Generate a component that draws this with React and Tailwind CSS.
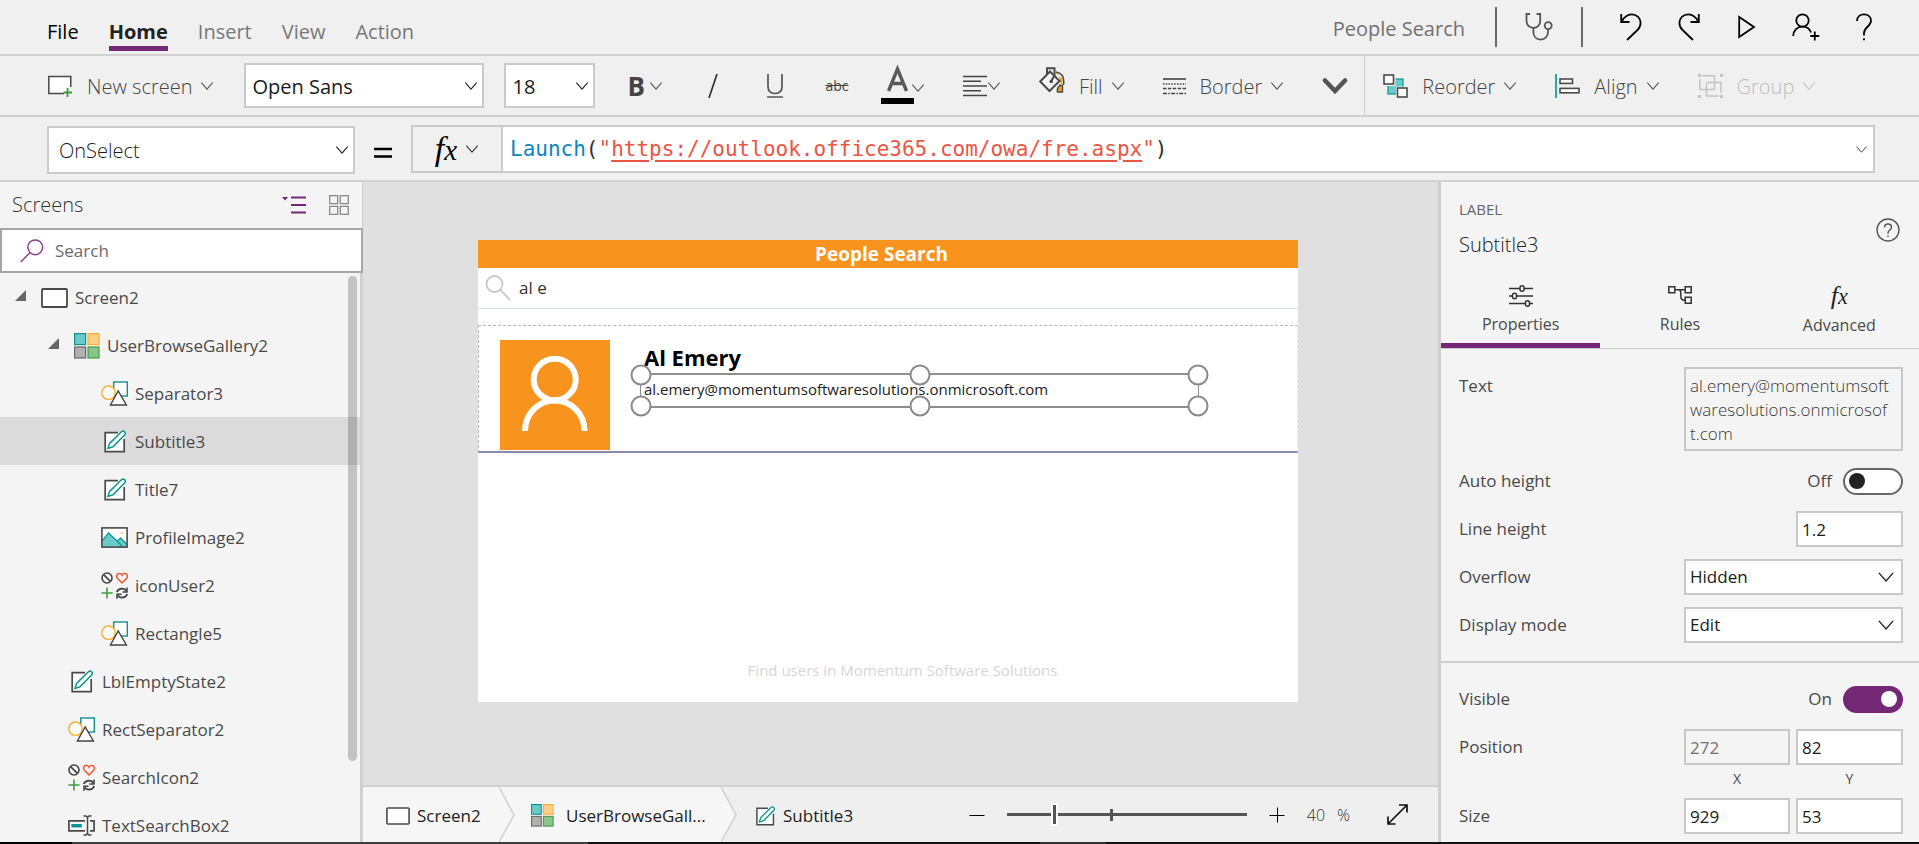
import React from "react";

/* ---------- small drawing helpers ---------- */

function Chevron({ className = "h-2 w-3.5", stroke = "#555555", width = 1.2 }) {
  return (
    <svg viewBox="0 0 14 9" className={`shrink-0 ${className}`} fill="none" aria-hidden="true">
      <path d="M.6 .8 7 8 13.4 .8" stroke={stroke} strokeWidth={width} />
    </svg>
  );
}

function Fx({ className }) {
  return (
    <span
      aria-hidden="true"
      className={`font-['Liberation_Serif',serif] leading-6 italic ${className}`}
    >
      f<span className="text-[0.85em]">x</span>
    </span>
  );
}

function ScreenIcon({ className = "h-5 w-[27px]" }) {
  return (
    <svg viewBox="0 0 27 20" className={`shrink-0 ${className}`} aria-hidden="true">
      <rect x="1" y="1" width="25" height="18" rx="1" fill="#fff" stroke="#4a4a4a" strokeWidth="1.8" />
    </svg>
  );
}

function GalleryIcon({ className = "h-[26px] w-[26px]" }) {
  return (
    <svg viewBox="0 0 26 26" className={`shrink-0 ${className}`} strokeWidth="1.2" aria-hidden="true">
      <rect x=".6" y=".6" width="11" height="11" fill="#68cbca" stroke="#12908c" />
      <rect x="14" y=".6" width="11" height="11" fill="#fccf86" stroke="#fbad34" />
      <rect x=".6" y="14" width="11" height="11" fill="#b0b0b0" stroke="#666" />
      <rect x="14" y="14" width="11" height="11" fill="#89c48a" stroke="#429b45" />
    </svg>
  );
}

function ShapesIcon() {
  return (
    <svg viewBox="0 0 27 25" className="h-[25px] w-[27px] shrink-0" fill="#fff" strokeWidth="1.4" aria-hidden="true">
      <rect x="12.7" y="1" width="13.6" height="14" stroke="#12908c" />
      <circle cx="7.5" cy="11.7" r="6.7" stroke="#fbad34" />
      <path d="M9.4 24 17.2 10 25.4 24Z" stroke="#444" />
    </svg>
  );
}

function LabelIcon({ className = "h-[23px] w-[27px]" }) {
  return (
    <svg viewBox="0 0 27 23" className={`shrink-0 ${className}`} aria-hidden="true">
      <rect x="4.2" y="2.6" width="19" height="19" fill="#fff" />
      <path d="M17 2.6H4.2V21.6H23.2V9" fill="none" stroke="#4a4a4a" strokeWidth="1.7" />
      <path
        d="M7 18.4 8.6 13.4 20.4 1.8C21.4 .9 22.8 1 23.6 1.8C24.4 2.7 24.4 4 23.6 4.9L12 16.8Z"
        fill="#fff"
        stroke="#0d9490"
        strokeWidth="1.5"
      />
    </svg>
  );
}

function ImageIcon() {
  return (
    <svg viewBox="0 0 27 21" className="h-[21px] w-[27px] shrink-0" aria-hidden="true">
      <rect x=".9" y=".9" width="25.2" height="19.2" fill="#fff" />
      <path d="M1 14 7.6 6 16 14.5 19.5 11 26 17V20H1Z" fill="#68cbca" />
      <path d="M1.4 13.4 7.6 6 21 19M15.6 14.2 19.5 11 25.6 17" fill="none" stroke="#0d9490" strokeWidth="1.2" />
      <circle cx="21" cy="6" r="1.3" fill="#fccf86" />
      <rect x=".9" y=".9" width="25.2" height="19.2" fill="none" stroke="#4a4a4a" strokeWidth="1.6" />
    </svg>
  );
}

function IconsIcon() {
  return (
    <svg viewBox="0 0 27 27" className="h-[27px] w-[27px] shrink-0" fill="none" aria-hidden="true">
      <circle cx="6" cy="6" r="5" stroke="#444" strokeWidth="1.6" />
      <path d="M2.6 2.6 9.4 9.4" stroke="#444" strokeWidth="1.6" />
      <path
        d="M21 11 16.4 6.2C15 4.6 15.6 2 17.7 1.5C19.2 1.1 20.4 2 21 3.2C21.6 2 22.8 1.1 24.3 1.5C26.4 2 27 4.6 25.6 6.2Z"
        stroke="#f1501f"
        strokeWidth="1.4"
      />
      <path d="M6 15.5V26.5M.4 21H11.6" stroke="#429b45" strokeWidth="1.6" />
      <path d="M15.8 20C17.4 16.2 22.6 15.6 25.2 18.6M26.2 22C24.6 26.2 19.4 26.6 16.8 23.6" stroke="#444" strokeWidth="1.8" />
      <path d="M26 15.4V20H21.4M16 26.8V22.2H20.6" stroke="#444" strokeWidth="1.6" />
    </svg>
  );
}

function TextInputIcon() {
  return (
    <svg viewBox="0 0 27 21" className="h-[21px] w-[27px] shrink-0" fill="none" aria-hidden="true">
      <path d="M17 5.8H.9V15.8H17M22 5.8H26.1V15.8H22" stroke="#4a4a4a" strokeWidth="1.7" />
      <rect x="3.4" y="9" width="10.4" height="3.4" fill="#0d9490" />
      <path d="M15.5 1H18L19.5 2.4 21 1H23.5M19.5 2.4V18.6M15.5 20H18L19.5 18.6 21 20H23.5" stroke="#4a4a4a" strokeWidth="1.5" />
    </svg>
  );
}

function Expander() {
  return (
    <svg viewBox="0 0 11 11" className="size-[11px] shrink-0 -translate-y-0.5" aria-hidden="true">
      <path d="M0 11H11V0Z" fill="#666" />
    </svg>
  );
}

function Magnifier({ className, stroke, width = 1.6 }) {
  return (
    <svg viewBox="0 0 26 26" className={`shrink-0 ${className}`} fill="none" stroke={stroke} strokeWidth={width} aria-hidden="true">
      <circle cx="16.5" cy="9" r="8" />
      <path d="M10.8 14.8 .8 25" />
    </svg>
  );
}

/* ---------- header ---------- */

function Header() {
  const tabs = ["Insert", "View", "Action"];
  return (
    <header className="flex h-14 shrink-0 items-stretch border-b-2 border-[#d1d1d1] pr-[47px] pl-[47px] text-xl">
      <nav className="flex items-start gap-[30px] pt-[18px] leading-7 text-[#777777]">
        <a href="#file" className="text-black">File</a>
        <a href="#home" className="border-b-[5px] border-[#742774] font-bold text-[#222222]">Home</a>
        {tabs.map((t) => (
          <a key={t} href={`#${t.toLowerCase()}`}>{t}</a>
        ))}
      </nav>
      <div className="ml-auto flex items-center text-[#707070]">
        <span className="pt-1">People Search</span>
        <span className="ml-[30px] h-10 w-0.5 bg-[#6a6a6a]" />
        <button aria-label="App checker" className="mx-7">
          <svg viewBox="0 0 28 28" className="size-7" fill="none" stroke="#555" strokeWidth="1.8">
            <path d="M5 1H1.5V8C1.5 12 4.2 14.8 8.4 14.8C12.6 14.8 15.2 12 15.2 8V1H11.6" />
            <path d="M8.4 14.8V19C8.4 23.4 11.2 26.6 15.6 26.6C20 26.6 23 23.4 23 19V16.2" />
            <circle cx="23.2" cy="12.6" r="3.5" />
          </svg>
        </button>
        <span className="h-10 w-0.5 bg-[#6a6a6a]" />
        <div className="ml-[37px] flex items-center gap-9 text-black">
          <button aria-label="Undo">
            <svg viewBox="0 0 22 28" className="h-7 w-[22px]" fill="none" stroke="#000" strokeWidth="1.8">
              <path d="M1.2 1V9H9.5" />
              <path d="M1.6 8.5C4.5 3.5 7.5 1.4 11.5 1.4C17 1.4 20.6 5 20.6 10C20.6 12.8 19.5 15 17.5 17L7 27" />
            </svg>
          </button>
          <button aria-label="Redo">
            <svg viewBox="0 0 22 28" className="h-7 w-[22px]" fill="none" stroke="#000" strokeWidth="1.8">
              <path d="M20.8 1V9H12.5" />
              <path d="M20.4 8.5C17.5 3.5 14.5 1.4 10.5 1.4C5 1.4 1.4 5 1.4 10C1.4 12.8 2.5 15 4.5 17L15 27" />
            </svg>
          </button>
          <button aria-label="Preview the app">
            <svg viewBox="0 0 20 24" className="h-6 w-5" fill="none" stroke="#000" strokeWidth="1.8">
              <path d="M3.2 2V22L18 12Z" />
            </svg>
          </button>
          <button aria-label="Share">
            <svg viewBox="0 0 28 28" className="size-7" fill="none" stroke="#000" strokeWidth="1.8">
              <circle cx="10.5" cy="7.5" r="6.2" />
              <path d="M1.2 23C1.2 17.5 5 13.7 10.5 13.7C14.5 13.7 17.8 16 19 19.5" />
              <path d="M22.8 18.5V27.5M18.3 23H27.3" />
            </svg>
          </button>
          <button aria-label="Help">
            <svg viewBox="0 0 16 28" className="h-7 w-4" fill="none" stroke="#000" strokeWidth="1.8">
              <path d="M1 8C1 4 4 1.4 8 1.4C12 1.4 15 4 15 7.8C15 13.5 8 14 8 20V22.5" />
              <path d="M8 25.2V27.2" />
            </svg>
          </button>
        </div>
      </div>
    </header>
  );
}

/* ---------- ribbon ---------- */

function PickList({ label, options, className, chevron = "right-1.5" }) {
  return (
    <div className={`relative ${className}`}>
      <select
        aria-label={label}
        className="size-full appearance-none border-2 border-[#cacaca] bg-white px-1.5 pt-0.5 text-[#1b1b1b] outline-none"
      >
        {options.map((o) => (
          <option key={o}>{o}</option>
        ))}
      </select>
      <span className={`pointer-events-none absolute inset-y-0 flex items-center ${chevron}`}>
        <Chevron stroke="#222" />
      </span>
    </div>
  );
}

function RibbonButton({ icon, label, className = "", stroke }) {
  return (
    <button className={`flex items-center gap-2 ${className}`}>
      <span className="flex items-center gap-3.5">
        {icon}
        <span className="pt-0.5">{label}</span>
      </span>
      <Chevron stroke={stroke} />
    </button>
  );
}

function Ribbon() {
  return (
    <div className="flex h-[61px] shrink-0 items-center border-b-2 border-[#d1d1d1] pl-[47px] text-xl font-light text-[#444444]">
      <RibbonButton
        label="New screen"
        icon={
          <svg viewBox="0 0 26 22" className="h-[22px] w-[26px]" aria-hidden="true">
            <path d="M17 18.5H1.8V1.5H23.8V12" fill="#fff" stroke="#4a4a4a" strokeWidth="1.5" />
            <path d="M20.5 13V22M16.5 17.5H25" stroke="#3f9c42" strokeWidth="1.8" />
          </svg>
        }
      />
      <PickList label="Font" options={["Open Sans", "Segoe UI"]} className="ml-[30px] h-[45px] w-60 font-normal" />
      <PickList label="Font size" options={["18", "20", "24"]} className="ml-5 h-[45px] w-[91px] font-normal" />
      <div className="ml-8 flex items-center gap-[38px]">
        <button aria-label="Bold" className="flex items-center gap-1 text-[26px] leading-8 font-bold text-[#444444]">
          B<Chevron />
        </button>
        <button aria-label="Italic">
          <svg viewBox="0 0 24 24" className="size-6" aria-hidden="true">
            <path d="M16 0 8 24" stroke="#333" strokeWidth="1.7" />
          </svg>
        </button>
        <button aria-label="Underline">
          <svg viewBox="0 0 24 24" className="size-6" fill="none" stroke="#555" strokeWidth="1.7" aria-hidden="true">
            <path d="M5 0V12.5C5 17 7.5 19.5 12 19.5C16.5 19.5 19 17 19 12.5V0M4 23H20" />
          </svg>
        </button>
        <button aria-label="Strikethrough" className="w-6 text-center text-sm font-normal text-[#444444] line-through">
          abc
        </button>
        <button aria-label="Font colour" className="flex items-end">
          <svg viewBox="0 0 22 36" className="h-9 w-[22px] overflow-visible" aria-hidden="true">
            <path d="M1.5 23 10.5 1 19.5 23M4.8 15.5H16.2" fill="none" stroke="#5a5a5a" strokeWidth="3.4" />
            <rect x="-6" y="30" width="33" height="6" fill="#000" />
          </svg>
          <Chevron className="mb-3 ml-0.5 h-2 w-3.5" />
        </button>
        <button aria-label="Text alignment" className="flex items-center">
          <svg viewBox="0 0 24 22" className="h-[22px] w-6" stroke="#444" strokeWidth="1.5" aria-hidden="true">
            <path d="M0 1.5H24M0 6.2H18M0 11H24M0 15.8H18M0 20.5H24" />
          </svg>
          <Chevron />
        </button>
        <RibbonButton
          label="Fill"
          icon={
            <svg viewBox="0 0 26 30" className="h-[30px] w-[26px] -translate-y-1" fill="none" aria-hidden="true">
              <path d="M17 5C23 6 25.5 11 24.5 18" stroke="#4a4a4a" strokeWidth="1.5" />
              <path d="M15 5C19 6 21 9 20.5 14L23.5 18V12Z" fill="#e0a51d" />
              <path d="M11 4.5 20.5 14 10.5 24 1.2 14.5Z" fill="#f5f5f5" stroke="#4a4a4a" strokeWidth="2" />
              <path d="M8 7.5V1.2H15.5V8.5L12.2 14" stroke="#4a4a4a" strokeWidth="2" />
              <circle cx="12.2" cy="14.5" r="1.8" fill="#4a4a4a" />
              <path d="M21 18C18.5 21 17.5 23 18.5 25H23.5V18.5Z" fill="#e0a51d" stroke="#4a4a4a" strokeWidth="1.4" />
            </svg>
          }
        />
        <RibbonButton
          label="Border"
          icon={
            <svg viewBox="0 0 23 18" className="h-[18px] w-[23px]" stroke="#444" strokeWidth="1.6" aria-hidden="true">
              <path d="M0 2H23" />
              <path d="M0 7H23" strokeDasharray="1.5 1.3" />
              <path d="M0 11.5H23" strokeDasharray="3.4 1.5" />
              <path d="M0 16.5H23" strokeDasharray="4 1.3 1.5 1.3" />
            </svg>
          }
        />
        <button aria-label="More">
          <svg viewBox="0 0 26 16" className="h-4 w-[26px]" fill="none" aria-hidden="true">
            <path d="M3 2.5 13 13 23 2.5" stroke="#555" strokeWidth="4.5" strokeLinecap="round" />
          </svg>
        </button>
      </div>
      <div className="ml-4 flex items-center gap-[38px] self-stretch border-l border-[#cfcfcf] pl-[18px]">
        <RibbonButton
          label="Reorder"
          icon={
            <svg viewBox="0 0 25 24" className="h-6 w-[25px]" aria-hidden="true">
              <rect x="5" y="5" width="15" height="15" fill="#68cbca" stroke="#0d9490" strokeWidth="1.2" />
              <rect x="0" y="0" width="12.5" height="12" fill="#f0f0f0" />
              <rect x="13" y="12.5" width="12" height="12" fill="#f0f0f0" />
              <rect x="1" y="1" width="9.5" height="9" fill="#fff" stroke="#4a4a4a" strokeWidth="1.6" />
              <rect x="14.5" y="14" width="9.5" height="9" fill="#fff" stroke="#4a4a4a" strokeWidth="1.6" />
            </svg>
          }
        />
        <RibbonButton
          label="Align"
          icon={
            <svg viewBox="0 0 25 24" className="h-6 w-[25px]" aria-hidden="true">
              <path d="M1 0V24" stroke="#12a09c" strokeWidth="1.8" />
              <rect x="5" y="5" width="12.5" height="4.4" fill="#fff" stroke="#4a4a4a" strokeWidth="1.6" />
              <rect x="5" y="14.4" width="19" height="4.4" fill="#fff" stroke="#4a4a4a" strokeWidth="1.6" />
            </svg>
          }
        />
        <RibbonButton
          label="Group"
          stroke="#c4c4c4"
          className="text-[#bdbdbd]"
          icon={
            <svg viewBox="0 0 25 24" className="h-6 w-[25px]" fill="none" stroke="#c4c4c4" strokeWidth="1.5" aria-hidden="true">
              <path d="M4 1.8H16.5V15.5H1.8V5M9 8.5H23V19M21 22H8.5V8.5" />
              <path d="M0 1.5H3M22 1.5H25M0 22.5H3M22 22.5H25" strokeWidth="3" />
            </svg>
          }
        />
      </div>
    </div>
  );
}

/* ---------- formula bar ---------- */

function FormulaBar() {
  return (
    <div className="flex h-[65px] shrink-0 items-start border-b-2 border-[#d1d1d1] pt-2 pr-11 pl-[47px] text-xl">
      <PickList
        label="Property"
        options={["OnSelect", "Text", "Visible"]}
        className="mt-px h-12 w-[308px] font-light [&>select]:px-2.5"
      />
      <svg viewBox="0 0 18 12" className="mx-[19px] mt-[22px] h-3 w-[18px] shrink-0" aria-hidden="true">
        <path d="M0 2H18M0 9.5H18" stroke="#000" strokeWidth="2.6" />
      </svg>
      <button
        aria-label="Functions"
        className="flex h-12 w-[90px] shrink-0 items-center justify-center gap-2 border-2 border-r-0 border-[#cacaca]"
      >
        <Fx className="text-[34px] text-black" />
        <Chevron stroke="#333" />
      </button>
      <div className="flex h-12 min-w-0 flex-1 items-center justify-between border-2 border-[#cacaca] bg-white pr-1.5 pl-[7px]">
        <code className="pt-px font-['DejaVu_Sans_Mono',monospace] text-[21px] text-[#333333]">
          <span className="text-[#0c86bd]">Launch</span>(<span className="text-[#ea5545]">"</span>
          <a href="#formula" className="text-[#ea5545] underline decoration-2 underline-offset-4">
            https://outlook.office365.com/owa/fre.aspx
          </a>
          <span className="text-[#ea5545]">"</span>)
        </code>
        <button aria-label="Expand formula bar">
          <Chevron className="h-[7px] w-[11px]" stroke="#333" />
        </button>
      </div>
    </div>
  );
}

/* ---------- screens tree ---------- */

const TREE = [
  { name: "Screen2", icon: ScreenIcon, pad: "pl-[15px]", open: true },
  { name: "UserBrowseGallery2", icon: GalleryIcon, pad: "pl-12", open: true },
  { name: "Separator3", icon: ShapesIcon, pad: "pl-[101px]" },
  { name: "Subtitle3", icon: LabelIcon, pad: "pl-[101px]", selected: true },
  { name: "Title7", icon: LabelIcon, pad: "pl-[101px]" },
  { name: "ProfileImage2", icon: ImageIcon, pad: "pl-[101px]" },
  { name: "iconUser2", icon: IconsIcon, pad: "pl-[101px]" },
  { name: "Rectangle5", icon: ShapesIcon, pad: "pl-[101px]" },
  { name: "LblEmptyState2", icon: LabelIcon, pad: "pl-[68px]" },
  { name: "RectSeparator2", icon: ShapesIcon, pad: "pl-[68px]" },
  { name: "SearchIcon2", icon: IconsIcon, pad: "pl-[68px]" },
  { name: "TextSearchBox2", icon: TextInputIcon, pad: "pl-[68px]" },
];

function TreePanel() {
  return (
    <aside className="flex w-[363px] shrink-0 flex-col bg-[#f4f4f4]">
      <div className="flex h-[46px] shrink-0 items-center border-r border-[#cfcfcf] pr-[13px] pl-3">
        <h2 className="text-xl font-light text-[#333333]">Screens</h2>
        <button aria-label="Tree view" className="ml-auto">
          <svg viewBox="0 0 24 18" className="h-[18px] w-6" aria-hidden="true">
            <path d="M9 1.5H24M9 9H24M9 16.5H24" stroke="#742774" strokeWidth="1.8" />
            <path d="M0 1H6L3 4.5Z" fill="#742774" />
          </svg>
        </button>
        <button aria-label="Thumbnail view" className="ml-[23px]">
          <svg viewBox="0 0 20 20" className="size-5" fill="none" stroke="#888" strokeWidth="1.3" aria-hidden="true">
            <path d="M.7 .7H8.7V8.7H.7ZM11.3 .7H19.3V8.7H11.3ZM.7 11.3H8.7V19.3H.7ZM11.3 11.3H19.3V19.3H11.3Z" />
          </svg>
        </button>
      </div>
      <label className="flex h-[45px] shrink-0 items-center gap-[11px] border-2 border-[#a6a6a6] bg-white pl-[18px]">
        <Magnifier className="size-6" stroke="#8b3f8b" />
        <input
          aria-label="Search"
          placeholder="Search"
          className="min-w-0 flex-1 bg-transparent text-[17px] outline-none placeholder:text-[#6a6a6a]"
        />
      </label>
      <div className="relative min-h-0 flex-1 overflow-hidden border-r-[3px] border-[#d1d1d1]">
        <ul>
          {TREE.map(({ name, icon: Icon, pad, open, selected }) => (
            <li key={name}>
              <button
                className={`flex h-12 w-full items-center pt-px text-[17px] text-[#4a4a4a] ${pad} ${
                  selected ? "bg-[#dbdbdb]" : ""
                }`}
              >
                {open && (
                  <span className="mr-[15px]">
                    <Expander />
                  </span>
                )}
                <Icon />
                <span className="ml-[7px]">{name}</span>
              </button>
            </li>
          ))}
        </ul>
        <div className="absolute top-[3px] right-[3px] h-[485px] w-[9px] rounded-full bg-black/20" />
      </div>
    </aside>
  );
}

/* ---------- design canvas ---------- */

function Handle({ className }) {
  return (
    <span className={`absolute size-[21px] -translate-1/2 rounded-full border-2 border-[#8a8a8a] bg-white ${className}`} />
  );
}

function Canvas() {
  return (
    <div className="min-h-0 flex-1 overflow-hidden bg-[#e0e0e0] pt-[58px] pl-[115px]">
      <section className="flex h-[462px] w-[820px] flex-col bg-white font-['Open_Sans',sans-serif]">
        <h1 className="flex h-7 shrink-0 items-center justify-center bg-[#f8941d] pt-px pr-[13px] text-[19px] font-bold text-white">
          People Search
        </h1>
        <label className="flex h-[41px] shrink-0 items-center gap-2 border-b border-[#d3dff0] pl-[7px]">
          <Magnifier className="size-[26px] -scale-x-100" stroke="#c8c8c8" width={1.8} />
          <input
            aria-label="Search people"
            defaultValue="al e"
            className="min-w-0 flex-1 bg-transparent text-[17px] font-medium text-[#333333] outline-none"
          />
        </label>
        <article className="relative mt-4 flex h-[128px] shrink-0 border border-b-2 border-dashed border-[#b5b5b5] border-r-[#e4e4e4] border-b-[#8b8bb0] pt-[14px] pl-[21px] [border-bottom-style:solid]">
          <div className="size-[110px] shrink-0 bg-[#f8941d]">
            <svg viewBox="0 0 110 110" className="size-full" fill="none" stroke="#fff" strokeWidth="6" aria-hidden="true">
              <ellipse cx="54.7" cy="39.5" rx="21" ry="20.8" />
              <path d="M25 91C25 74 38 60.5 54.7 60.5C71.5 60.5 84.5 74 84.5 91" />
            </svg>
          </div>
          <div className="ml-[34px] flex flex-col whitespace-nowrap text-black">
            <strong className="pt-0.5 text-[22px] leading-[30px] font-bold">Al Emery</strong>
            <span className="pt-[5px] text-[15px] leading-6 text-[#222222]">
              al.emery@momentumsoftwaresolutions.onmicrosoft.com
            </span>
          </div>
          <div className="absolute top-[47px] left-[161px] h-[35px] w-[559px] border-x border-y-2 border-[#8f8f8f]">
            <Handle className="top-0 left-0" />
            <Handle className="top-0 left-1/2" />
            <Handle className="top-0 left-full" />
            <Handle className="top-full left-0" />
            <Handle className="top-full left-1/2" />
            <Handle className="top-full left-full" />
          </div>
        </article>
        <p className="mt-auto pr-px pb-5 pl-[30px] text-center text-[15px] leading-6 text-[#d6d6d6]">
          Find users in Momentum Software Solutions
        </p>
      </section>
    </div>
  );
}

function CrumbArrow({ fill }) {
  return (
    <svg viewBox="0 0 16 55" preserveAspectRatio="none" className="h-full w-4 shrink-0" aria-hidden="true">
      <rect width="16" height="55" fill={fill} />
      <path d="M0 0 15 28 0 55Z" fill="#f6f6f6" />
      <path d="M0 0 15 28 0 55" fill="none" stroke="#d4d4d4" strokeWidth="1.6" />
    </svg>
  );
}

function StatusBar() {
  return (
    <footer className="flex h-[57px] shrink-0 items-center border-t-2 border-[#d1d1d1] bg-[#efefef] text-[17px] text-[#222222]">
      <nav aria-label="Selection path" className="flex h-full">
        <a href="#screen2" className="flex w-[136px] items-center gap-[7px] bg-[#f6f6f6] pt-0.5 pl-[23px]">
          <ScreenIcon className="h-[18px] w-6" />
          Screen2
        </a>
        <CrumbArrow fill="#f6f6f6" />
        <a href="#gallery" className="flex w-[206px] items-center gap-3 bg-[#f6f6f6] pt-0.5 pl-4">
          <GalleryIcon className="size-[23px]" />
          UserBrowseGall...
        </a>
        <CrumbArrow fill="#efefef" />
        <a href="#subtitle" className="flex items-center gap-1.5 pt-0.5 pl-4">
          <LabelIcon className="h-5 w-6" />
          Subtitle3
        </a>
      </nav>
      <div className="ml-auto flex items-center pr-[30px]">
        <button aria-label="Zoom out">
          <svg viewBox="0 0 16 16" className="size-4" aria-hidden="true">
            <path d="M.5 8.5H15.5" stroke="#000" strokeWidth="1" />
          </svg>
        </button>
        <div className="relative ml-[22px] flex h-6 w-60 items-center">
          <input
            type="range"
            aria-label="Zoom"
            min="0"
            max="210"
            defaultValue="40"
            className="h-6 w-full appearance-none bg-transparent [&::-webkit-slider-runnable-track]:h-[3px] [&::-webkit-slider-runnable-track]:bg-[#555555] [&::-webkit-slider-thumb]:-mt-[10px] [&::-webkit-slider-thumb]:h-[23px] [&::-webkit-slider-thumb]:w-[7px] [&::-webkit-slider-thumb]:appearance-none [&::-webkit-slider-thumb]:border-2 [&::-webkit-slider-thumb]:border-white [&::-webkit-slider-thumb]:bg-[#555555]"
          />
          <span className="pointer-events-none absolute left-[43%] h-3 w-[3px] bg-[#555555]" />
        </div>
        <button aria-label="Zoom in" className="ml-[22px]">
          <svg viewBox="0 0 16 16" className="size-4" aria-hidden="true">
            <path d="M.5 8.5H15.5M8.5 .5V15.5" stroke="#000" strokeWidth="1" />
          </svg>
        </button>
        <span className="ml-[22px] flex gap-3 text-base font-light text-[#333333]">
          <span>40</span>
          <span>%</span>
        </span>
        <button aria-label="Fit to window" className="ml-[37px]">
          <svg viewBox="0 0 21 21" className="size-[21px]" fill="none" stroke="#111" strokeWidth="1.7" aria-hidden="true">
            <path d="M1.5 19.5 19.5 1.5M12 1H20V8.5M1 12.5V20H8.5" />
          </svg>
        </button>
      </div>
    </footer>
  );
}

/* ---------- properties panel ---------- */

const FIELD = "h-9 border-2 border-[#c8c8c8] bg-white px-1 text-[17px] text-[#1b1b1b] outline-none";

function Row({ id, label, children }) {
  return (
    <div className="flex h-12 items-center justify-between">
      <label htmlFor={id}>{label}</label>
      {children}
    </div>
  );
}

function Toggle({ id, on }) {
  return (
    <span className="flex items-center gap-[11px]">
      {on ? "On" : "Off"}
      <input
        id={id}
        type="checkbox"
        role="switch"
        defaultChecked={on}
        className="flex h-[27px] w-[60px] appearance-none items-center rounded-full border-2 border-[#666666] bg-white px-1 before:size-4 before:rounded-full before:bg-[#222222] checked:justify-end checked:border-[#742774] checked:bg-[#742774] checked:before:bg-white"
      />
    </span>
  );
}

function PropertySelect({ id, options }) {
  return (
    <span className="relative w-[219px]">
      <select id={id} className={`${FIELD} w-full appearance-none`}>
        {options.map((o) => (
          <option key={o}>{o}</option>
        ))}
      </select>
      <span className="pointer-events-none absolute inset-y-0 right-2 flex items-center">
        <Chevron className="h-2.5 w-[18px]" stroke="#222" />
      </span>
    </span>
  );
}

function PropertiesPanel() {
  return (
    <aside className="flex w-[481px] shrink-0 flex-col overflow-hidden border-l-[3px] border-[#cfcfcf] bg-[#f4f4f4] text-[17px] text-[#4a4a4a]">
      <div className="flex h-[83px] shrink-0 items-center justify-between pr-[19px] pl-[18px]">
        <div className="pt-2.5">
          <p className="text-[15px] leading-6 text-[#666666]">LABEL</p>
          <h2 className="pt-2 text-xl leading-8 font-light text-[#222222]">Subtitle3</h2>
        </div>
        <button aria-label="Help on this control" className="mt-3">
          <svg viewBox="0 0 24 24" className="size-6" fill="none" stroke="#555" strokeWidth="1.4" aria-hidden="true">
            <circle cx="12" cy="12" r="11" />
            <path d="M8.5 9.5C8.5 7.5 10 6 12 6C14 6 15.5 7.3 15.5 9.2C15.5 12 12 12 12 15V15.8M12 17.5V19" />
          </svg>
        </button>
      </div>
      <div role="tablist" className="grid h-[84px] shrink-0 grid-cols-3 border-b border-[#cacaca] text-base">
        <button role="tab" aria-selected="true" className="flex flex-col items-center gap-1 border-b-[5px] border-[#742774] pt-[19px]">
          <svg viewBox="0 0 24 24" className="size-6" fill="#f4f4f4" stroke="#333" strokeWidth="1.5" aria-hidden="true">
            <path d="M0 4.5H24M0 12H24M0 19.5H24" />
            <rect x="11" y="1.7" width="4" height="5.6" rx="2" />
            <rect x="3.5" y="9.2" width="4" height="5.6" rx="2" />
            <rect x="16.5" y="16.7" width="4" height="5.6" rx="2" />
          </svg>
          Properties
        </button>
        <button role="tab" aria-selected="false" className="flex flex-col items-center gap-1 pt-[19px]">
          <svg viewBox="0 0 24 24" className="size-6" fill="none" stroke="#333" strokeWidth="1.5" aria-hidden="true">
            <path d="M.8 2.8H6.8V8.8H.8ZM17.2 2.8H23.2V8.8H17.2ZM17.2 13.3H23.2V19.3H17.2Z" />
            <path d="M6.8 5.8H17.2M11 5.8C13 6 12.8 8 12.8 10V12.5C12.8 15 14 16.3 17.2 16.3" />
          </svg>
          Rules
        </button>
        <button role="tab" aria-selected="false" className="flex flex-col items-center gap-1 pt-[19px]">
          <Fx className="text-[26px] text-[#222222]" />
          Advanced
        </button>
      </div>
      <form className="flex flex-col" onSubmit={(e) => e.preventDefault()}>
        <fieldset className="border-b-2 border-[#cfcfcf] pt-[18px] pr-4 pb-3 pl-[18px]">
          <div className="mb-1.5 flex items-start justify-between">
            <label htmlFor="p-text" className="pt-[7px] leading-6">Text</label>
            <textarea
              id="p-text"
              readOnly
              rows={3}
              value="al.emery@momentumsoftwaresolutions.onmicrosoft.com"
              className="h-[84px] w-[219px] resize-none overflow-hidden border-2 border-[#c8c8c8] bg-transparent pt-[5px] pr-[11px] pl-1 leading-6 font-light break-all text-[#3a3a3a] outline-none"
            />
          </div>
          <Row id="p-auto" label="Auto height">
            <Toggle id="p-auto" on={false} />
          </Row>
          <Row id="p-line" label="Line height">
            <input id="p-line" defaultValue="1.2" className={`${FIELD} w-[107px]`} />
          </Row>
          <Row id="p-overflow" label="Overflow">
            <PropertySelect id="p-overflow" options={["Hidden", "Scroll"]} />
          </Row>
          <Row id="p-mode" label="Display mode">
            <PropertySelect id="p-mode" options={["Edit", "View", "Disabled"]} />
          </Row>
        </fieldset>
        <fieldset className="pt-3 pr-4 pl-[18px]">
          <Row id="p-visible" label="Visible">
            <Toggle id="p-visible" on />
          </Row>
          <Row id="p-x" label="Position">
            <span className="flex gap-1.5">
              <input id="p-x" readOnly value="272" className="h-9 w-[106px] border-2 border-[#c8c8c8] bg-[#f4f4f4] px-1 text-[#707070] outline-none" />
              <input aria-label="Y" defaultValue="82" className={`${FIELD} w-[107px]`} />
            </span>
          </Row>
          <div className="flex h-[21px] justify-end gap-1.5 text-sm leading-4">
            <span className="w-[106px] text-center">X</span>
            <span className="w-[107px] text-center">Y</span>
          </div>
          <Row id="p-w" label="Size">
            <span className="flex gap-1.5">
              <input id="p-w" defaultValue="929" className={`${FIELD} w-[106px]`} />
              <input aria-label="Height" defaultValue="53" className={`${FIELD} w-[107px]`} />
            </span>
          </Row>
        </fieldset>
      </form>
    </aside>
  );
}

export default function App() {
  return (
    <div className="flex h-screen flex-col overflow-hidden bg-[#f0f0f0] font-['Open_Sans','Noto_Sans',sans-serif]">
      <Header />
      <Ribbon />
      <FormulaBar />
      <div className="flex min-h-0 flex-1">
        <TreePanel />
        <main className="flex min-w-0 flex-1 flex-col">
          <Canvas />
          <StatusBar />
        </main>
        <PropertiesPanel />
      </div>
      <div className="flex h-0.5 shrink-0 bg-[#111111]">
        <span className="w-[72px] bg-black" />
        <span className="w-[516px] bg-[#3d3d3d]" />
        <span className="ml-[452px] w-[66px] bg-[#333333]" />
      </div>
    </div>
  );
}
